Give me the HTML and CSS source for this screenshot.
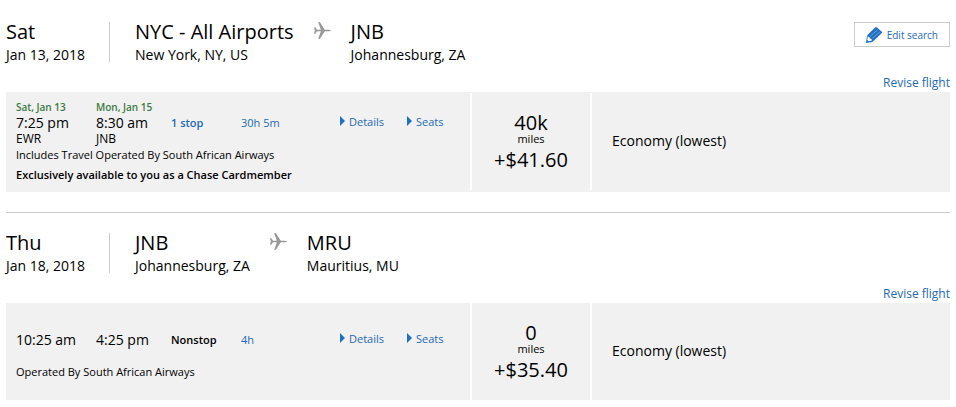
FILE: index.html
```html
<!DOCTYPE html>
<html lang="en">
<head>
    <meta charset="UTF-8">
    <meta name="viewport" content="width=device-width, initial-scale=1.0">
    <title>Selected Flights</title>
    <link rel="stylesheet" href="styles.css">
</head>
<body>
    <svg class="sprite" aria-hidden="true">
        <symbol id="plane" viewBox="0 0 16 16">
            <path d="M0 5h1.400L2.800 7.200h3.600L4 0h1.400l4.800 7.200h3.600q2.200.2 2.200.8t-2.200.8h-3.600L5.400 16H4l2.400-7.200H2.800L1.400 11H0l.8-3z"/>
        </symbol>
    </svg>
    <main class="trip">
        <section class="segment">
            <header class="segment-header">
                <div class="date">
                    <h2>Sat</h2>
                    <p>Jan 13, 2018</p>
                </div>
                <div class="route">
                    <div class="place">
                        <h2>NYC - All Airports</h2>
                        <p>New York, NY, US</p>
                    </div>
                    <svg class="plane"><use href="#plane"/></svg>
                    <div class="place">
                        <h2>JNB</h2>
                        <p>Johannesburg, ZA</p>
                    </div>
                </div>
                <button type="button" class="edit-button">
                    <svg class="pencil" viewBox="0 0 16 16">
                        <path d="M9 .5q1-.8 2 0l4.600 4q.8.9 0 1.800L7.200 14.200 6.200 15 .2 16 0 15.400 1 9.400 1.500 8z"/>
                        <path class="pencil-line" d="M4.200 9.300l7.500-6.600M6.300 11.400l7.500-6.600"/>
                        <path class="pencil-gap" d="M1.900 9.500l1.500.4.300 1.600 1.700.2.500 1.900-3.300.7-1.400-1.400z"/>
                    </svg>
                    Edit search
                </button>
            </header>
            <div class="revise"><a href="#">Revise flight</a></div>
            <div class="flight flight-framed">
                <div class="details">
                    <div class="legs">
                        <span class="day">Sat, Jan 13</span>
                        <span class="day">Mon, Jan 15</span>
                        <span class="time">7:25 pm</span>
                        <span class="time">8:30 am</span>
                        <a href="#" class="stops">1 stop</a>
                        <a href="#">30h 5m</a>
                        <a href="#" class="toggle">Details</a>
                        <a href="#" class="toggle">Seats</a>
                        <span class="airport">EWR</span>
                        <span class="airport">JNB</span>
                    </div>
                    <p class="note">Includes Travel Operated By South African Airways</p>
                    <p class="note exclusive">Exclusively available to you as a Chase Cardmember</p>
                </div>
                <div class="price">
                    <div class="miles">40k</div>
                    <div class="unit">miles</div>
                    <div class="cash">+$41.60</div>
                </div>
                <div class="cabin">Economy (lowest)</div>
            </div>
        </section>

        <section class="segment">
            <header class="segment-header">
                <div class="date">
                    <h2>Thu</h2>
                    <p>Jan 18, 2018</p>
                </div>
                <div class="route">
                    <div class="place">
                        <h2>JNB</h2>
                        <p>Johannesburg, ZA</p>
                    </div>
                    <svg class="plane"><use href="#plane"/></svg>
                    <div class="place">
                        <h2>MRU</h2>
                        <p>Mauritius, MU</p>
                    </div>
                </div>
            </header>
            <div class="revise"><a href="#">Revise flight</a></div>
            <div class="flight">
                <div class="details details-short">
                    <div class="legs">
                        <span class="time">10:25 am</span>
                        <span class="time">4:25 pm</span>
                        <span class="stops">Nonstop</span>
                        <a href="#">4h</a>
                        <a href="#" class="toggle">Details</a>
                        <a href="#" class="toggle">Seats</a>
                    </div>
                    <p class="note">Operated By South African Airways</p>
                </div>
                <div class="price">
                    <div class="miles">0</div>
                    <div class="unit">miles</div>
                    <div class="cash">+$35.40</div>
                </div>
                <div class="cabin">Economy (lowest)</div>
            </div>
        </section>
    </main>
</body>
</html>
```
FILE: styles.css
```css
body {
    font-family: "Open Sans", sans-serif;
    font-size: 14px;
    line-height: 20px;
    color: #000;
    background-color: #fff;
    margin: 0;
}

h2, p {
    margin: 0;
    font-weight: normal;
}

h2 {
    font-size: 20px;
    line-height: 20px;
    margin-bottom: 3px;
}

a {
    color: #1d6ab5;
    text-decoration: none;
}

a:hover {
    text-decoration: underline;
}

.sprite {
    display: none;
}

.trip {
    padding: 2px 6px 7px;
}

.segment {
    padding-top: 20px;
}

.segment + .segment {
    margin-top: 20px;
    border-top: 1px solid #ccc;
}

.segment-header {
    display: flex;
    align-items: flex-start;
}

.date {
    width: 103px;
    height: 40px;
    border-right: 1px solid #ccc;
}

.route {
    display: flex;
    flex: 1;
    gap: 20px;
    padding-left: 25px;
}

.plane {
    width: 17px;
    height: 17px;
    fill: #999;
}

.edit-button {
    display: flex;
    align-items: center;
    gap: 5px;
    height: 25px;
    padding: 0 11px;
    border: 1px solid #ccc;
    background-color: #fff;
    color: #1d6ab5;
    font-family: inherit;
    font-size: 10px;
    cursor: pointer;
}

.pencil {
    width: 16px;
    height: 16px;
    fill: #1f70c1;
}

.pencil-line {
    fill: none;
    stroke: #8fb9e2;
    stroke-width: 0.7;
}

.pencil-gap {
    fill: #fff;
}

.revise {
    padding-top: 8px;
    line-height: 19px;
    font-size: 12px;
    text-align: right;
}

.flight {
    display: flex;
    background-color: #f1f1f1;
}

.flight-framed {
    padding: 1px 0 2px;
}

.details {
    width: 464px;
    min-height: 97px;
    padding: 7px 0 5px 10px;
    box-sizing: border-box;
}

.details-short {
    padding-top: 14px;
}

.legs {
    display: grid;
    grid-template-columns: 80px 75px 70px 99px 67px;
    grid-template-rows: 14px 18px 13px;
    align-items: center;
    font-size: 11px;
    white-space: nowrap;
}

.day {
    grid-row: 1;
    font-size: 10px;
    font-weight: 600;
    color: #3d7a42;
}

.time, .legs a, .stops {
    grid-row: 2;
}

.time {
    font-size: 14px;
}

.stops {
    font-weight: 600;
}

.airport {
    grid-row: 3;
    font-size: 12px;
    line-height: 13px;
}

.toggle {
    padding-bottom: 2px;
}

.toggle::before {
    content: "";
    display: inline-block;
    margin-right: 4px;
    border-left: 5px solid #1f70c1;
    border-top: 5px solid transparent;
    border-bottom: 5px solid transparent;
}

.note {
    font-size: 11px;
}

.exclusive {
    font-weight: 600;
}

.price {
    width: 118px;
    padding-top: 18px;
    border: solid #fff;
    border-width: 0 2px;
    text-align: center;
}

.miles {
    font-size: 20px;
    line-height: 24px;
}

.unit {
    font-size: 11px;
    line-height: 8px;
}

.cash {
    font-size: 20px;
    line-height: 34px;
}

.cabin {
    display: flex;
    flex: 1;
    align-items: center;
    padding: 0 20px 2px;
}
```
